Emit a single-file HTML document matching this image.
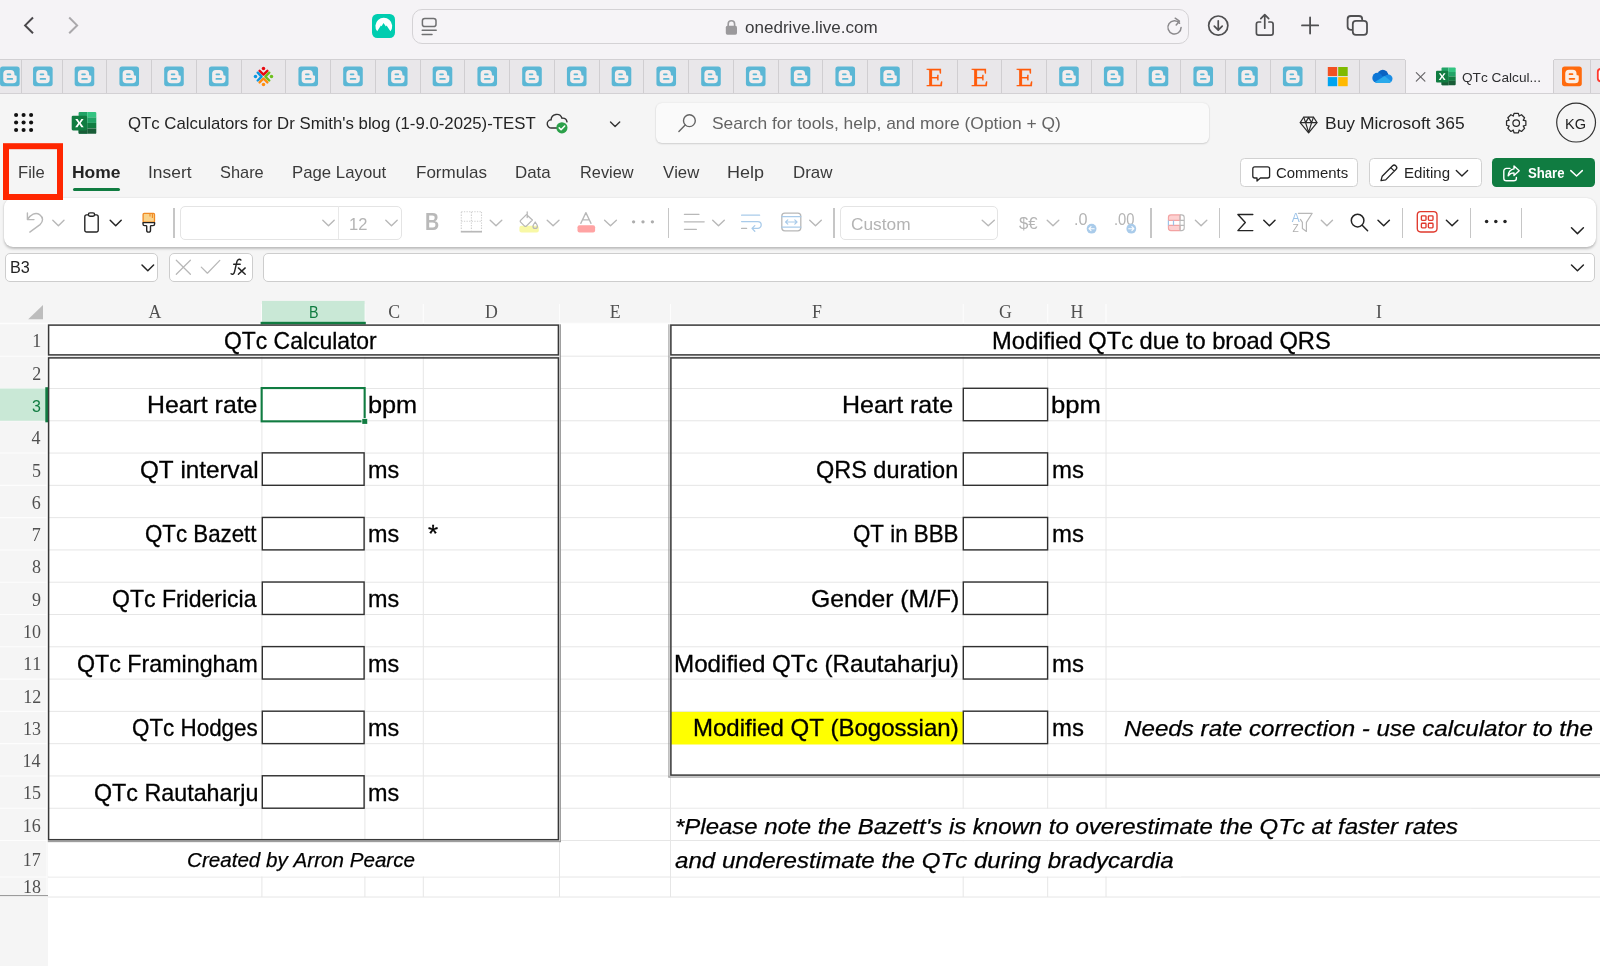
<!DOCTYPE html><html><head><meta charset="utf-8"><title>QTc Calculators</title><style>
*{box-sizing:border-box}
html,body{margin:0;padding:0}
body{will-change:transform;width:1600px;height:966px;overflow:hidden;background:#f5f5f5;font-family:"Liberation Sans",sans-serif;position:relative}
.t{position:absolute;white-space:nowrap;line-height:1;transform-origin:0 0;font-kerning:none;color:#000}
.a{position:absolute}
svg{position:absolute;left:0;top:0;overflow:visible}
.vs{position:absolute;width:1px;top:60px;height:33px;background:#d0ced1}
.sep{position:absolute;width:1.5px;top:207.5px;height:30px;background:#c6c6c6}
.gh{position:absolute;left:48px;height:1px;background:#e1e1e1;width:1552px}
.gv{position:absolute;top:324px;width:1px;background:#e1e1e1;height:573px}
.bx{position:absolute;border:1.5px solid #333}
.ob{position:absolute;border:1.6px solid #3a3a3a;box-shadow:0 0 0 1.1px #a8a8a8}
</style></head><body>
<div class="a" style="left:0;top:0;width:1600px;height:59px;background:#f5f3f6"></div>
<div class="a" style="left:411.7px;top:9px;width:777.6px;height:34.6px;border:1.2px solid #d4d2d5;border-radius:10px;background:#f6f4f7"></div>
<div class="a" style="left:371.8px;top:14.3px;width:23.5px;height:23.6px;border-radius:5.2px;background:#00cdb0"></div>
<span class="t" style="left:744.58px;top:19px;font-size:16.2px;color:#3b3b3d;transform:scaleX(1.0530);">onedrive.live.com</span>
<div class="a" style="left:0;top:59px;width:1600px;height:35px;background:#e9e7ea;border-top:1px solid #d2d0d3;border-bottom:1px solid #d3d1d4"></div>
<div class="a" style="left:1405px;top:58px;width:148.6px;height:35px;background:#f5f3f6"></div>
<div class="vs" style="left:20.70px"></div>
<div class="vs" style="left:61.60px"></div>
<div class="vs" style="left:106.35px"></div>
<div class="vs" style="left:151.10px"></div>
<div class="vs" style="left:195.85px"></div>
<div class="vs" style="left:240.60px"></div>
<div class="vs" style="left:285.35px"></div>
<div class="vs" style="left:330.10px"></div>
<div class="vs" style="left:374.85px"></div>
<div class="vs" style="left:419.60px"></div>
<div class="vs" style="left:464.35px"></div>
<div class="vs" style="left:509.10px"></div>
<div class="vs" style="left:553.85px"></div>
<div class="vs" style="left:598.60px"></div>
<div class="vs" style="left:643.35px"></div>
<div class="vs" style="left:688.10px"></div>
<div class="vs" style="left:732.85px"></div>
<div class="vs" style="left:777.60px"></div>
<div class="vs" style="left:822.35px"></div>
<div class="vs" style="left:867.10px"></div>
<div class="vs" style="left:911.85px"></div>
<div class="vs" style="left:956.60px"></div>
<div class="vs" style="left:1001.35px"></div>
<div class="vs" style="left:1046.10px"></div>
<div class="vs" style="left:1090.85px"></div>
<div class="vs" style="left:1135.60px"></div>
<div class="vs" style="left:1180.35px"></div>
<div class="vs" style="left:1225.10px"></div>
<div class="vs" style="left:1269.85px"></div>
<div class="vs" style="left:1314.60px"></div>
<div class="vs" style="left:1359.35px"></div>
<div class="vs" style="left:1589.80px"></div>
<div class="vs" style="left:1404.5px"></div><div class="vs" style="left:1553.1px"></div>
<svg width="1600" height="300" viewBox="0 0 1600 300">
<path d="M33 17.5 L25.1 25.4 L33 33.3" fill="none" stroke="#4a484b" stroke-width="2" stroke-linejoin="miter"/>
<path d="M69.2 17.5 L77.1 25.4 L69.2 33.3" fill="none" stroke="#aaa8ab" stroke-width="2" stroke-linejoin="miter"/>
<path d="M377.2 31.3 A8.4 8.4 0 1 1 390.4 31.3 L386.6 25.6 L385.9 26.6 L383.5 22.9 L381.6 26.2 L380.9 25.4 Z" fill="#fff"/>
<g fill="none" stroke="#707072" stroke-width="1.5" stroke-linecap="round"><rect x="422.4" y="18.4" width="13.6" height="8.2" rx="2.4"/><path d="M422.2 30.3 H436.2 M422.2 34.4 H432"/></g>
<rect x="725.8" y="25.8" width="11.2" height="8.9" rx="1.6" fill="#9b999c"/><path d="M728.2 26.5 v-2.6 a3.2 3.2 0 0 1 6.4 0 v2.6" fill="none" stroke="#9b999c" stroke-width="1.6"/>
<g fill="none" stroke="#8b898c" stroke-width="1.5" stroke-linecap="round" stroke-linejoin="round"><path d="M1179.6 23.2 A6.6 6.6 0 1 0 1181.1 27.5"/><path d="M1175.2 18.2 L1179.4 21.2 L1176.2 25"/></g>
<g fill="none" stroke="#4f4f51" stroke-width="1.7" stroke-linecap="round" stroke-linejoin="round"><circle cx="1218.25" cy="25.6" r="9.6"/><path d="M1218.25 20.8 V30 M1214.3 26.2 L1218.25 30.2 L1222.2 26.2"/></g>
<g fill="none" stroke="#4f4f51" stroke-width="1.7" stroke-linecap="round" stroke-linejoin="round"><path d="M1260.6 22 H1258.6 a2.2 2.2 0 0 0 -2.2 2.2 V33 a2.2 2.2 0 0 0 2.2 2.2 H1270.9 a2.2 2.2 0 0 0 2.2-2.2 V24.2 a2.2 2.2 0 0 0 -2.2-2.2 H1268.9"/><path d="M1264.75 15 V28.2 M1260.8 18.6 L1264.75 14.7 L1268.7 18.6"/></g>
<path d="M1302 25.4 H1318.2 M1310.1 17.4 V33.5" fill="none" stroke="#4f4f51" stroke-width="1.8" stroke-linecap="round"/>
<g fill="#f5f3f6" stroke="#4f4f51" stroke-width="1.8"><rect x="1347.6" y="16" width="14.6" height="13.8" rx="3.2"/><rect x="1352.8" y="20.9" width="14.2" height="14" rx="3.2"/></g>
<g transform="translate(0.05,66.60) scale(1.000)"><rect width="19.6" height="19.6" rx="2.6" fill="#5bb7d5"/><path d="M3.2 7.2 a3.8 3.8 0 0 1 3.8-3.8 h3.6 a3.8 3.8 0 0 1 3.8 3.8 v0.7 a0.9 0.9 0 0 0 .9 .9 h0.4 a0.9 0.9 0 0 1 .9 .9 v3.2 a3.8 3.8 0 0 1 -3.8 3.8 h-5.8 a3.8 3.8 0 0 1 -3.8-3.8 z" fill="#f3eded"/><rect x="6.6" y="6.9" width="4.6" height="1.7" rx=".85" fill="#5bb7d5"/><rect x="6.6" y="11.5" width="6.5" height="1.7" rx=".85" fill="#5bb7d5"/></g>
<g transform="translate(33.05,66.60) scale(1.000)"><rect width="19.6" height="19.6" rx="2.6" fill="#5bb7d5"/><path d="M3.2 7.2 a3.8 3.8 0 0 1 3.8-3.8 h3.6 a3.8 3.8 0 0 1 3.8 3.8 v0.7 a0.9 0.9 0 0 0 .9 .9 h0.4 a0.9 0.9 0 0 1 .9 .9 v3.2 a3.8 3.8 0 0 1 -3.8 3.8 h-5.8 a3.8 3.8 0 0 1 -3.8-3.8 z" fill="#f3eded"/><rect x="6.6" y="6.9" width="4.6" height="1.7" rx=".85" fill="#5bb7d5"/><rect x="6.6" y="11.5" width="6.5" height="1.7" rx=".85" fill="#5bb7d5"/></g>
<g transform="translate(74.67,66.60) scale(1.000)"><rect width="19.6" height="19.6" rx="2.6" fill="#5bb7d5"/><path d="M3.2 7.2 a3.8 3.8 0 0 1 3.8-3.8 h3.6 a3.8 3.8 0 0 1 3.8 3.8 v0.7 a0.9 0.9 0 0 0 .9 .9 h0.4 a0.9 0.9 0 0 1 .9 .9 v3.2 a3.8 3.8 0 0 1 -3.8 3.8 h-5.8 a3.8 3.8 0 0 1 -3.8-3.8 z" fill="#f3eded"/><rect x="6.6" y="6.9" width="4.6" height="1.7" rx=".85" fill="#5bb7d5"/><rect x="6.6" y="11.5" width="6.5" height="1.7" rx=".85" fill="#5bb7d5"/></g>
<g transform="translate(119.42,66.60) scale(1.000)"><rect width="19.6" height="19.6" rx="2.6" fill="#5bb7d5"/><path d="M3.2 7.2 a3.8 3.8 0 0 1 3.8-3.8 h3.6 a3.8 3.8 0 0 1 3.8 3.8 v0.7 a0.9 0.9 0 0 0 .9 .9 h0.4 a0.9 0.9 0 0 1 .9 .9 v3.2 a3.8 3.8 0 0 1 -3.8 3.8 h-5.8 a3.8 3.8 0 0 1 -3.8-3.8 z" fill="#f3eded"/><rect x="6.6" y="6.9" width="4.6" height="1.7" rx=".85" fill="#5bb7d5"/><rect x="6.6" y="11.5" width="6.5" height="1.7" rx=".85" fill="#5bb7d5"/></g>
<g transform="translate(164.17,66.60) scale(1.000)"><rect width="19.6" height="19.6" rx="2.6" fill="#5bb7d5"/><path d="M3.2 7.2 a3.8 3.8 0 0 1 3.8-3.8 h3.6 a3.8 3.8 0 0 1 3.8 3.8 v0.7 a0.9 0.9 0 0 0 .9 .9 h0.4 a0.9 0.9 0 0 1 .9 .9 v3.2 a3.8 3.8 0 0 1 -3.8 3.8 h-5.8 a3.8 3.8 0 0 1 -3.8-3.8 z" fill="#f3eded"/><rect x="6.6" y="6.9" width="4.6" height="1.7" rx=".85" fill="#5bb7d5"/><rect x="6.6" y="11.5" width="6.5" height="1.7" rx=".85" fill="#5bb7d5"/></g>
<g transform="translate(208.92,66.60) scale(1.000)"><rect width="19.6" height="19.6" rx="2.6" fill="#5bb7d5"/><path d="M3.2 7.2 a3.8 3.8 0 0 1 3.8-3.8 h3.6 a3.8 3.8 0 0 1 3.8 3.8 v0.7 a0.9 0.9 0 0 0 .9 .9 h0.4 a0.9 0.9 0 0 1 .9 .9 v3.2 a3.8 3.8 0 0 1 -3.8 3.8 h-5.8 a3.8 3.8 0 0 1 -3.8-3.8 z" fill="#f3eded"/><rect x="6.6" y="6.9" width="4.6" height="1.7" rx=".85" fill="#5bb7d5"/><rect x="6.6" y="11.5" width="6.5" height="1.7" rx=".85" fill="#5bb7d5"/></g>
<g transform="translate(263.48,76.6)"><g transform="rotate(0)"><circle cx="0" cy="-8" r="1.75" fill="#e90a12"/><path d="M-3.9 -5.8 L0 -1.9 L3.9 -5.8" fill="none" stroke="#e90a12" stroke-width="2.4" stroke-linecap="round" stroke-linejoin="round"/></g><g transform="rotate(90)"><circle cx="0" cy="-8" r="1.75" fill="#6dbf1e"/><path d="M-3.9 -5.8 L0 -1.9 L3.9 -5.8" fill="none" stroke="#6dbf1e" stroke-width="2.4" stroke-linecap="round" stroke-linejoin="round"/></g><g transform="rotate(180)"><circle cx="0" cy="-8" r="1.75" fill="#ff8c0c"/><path d="M-3.9 -5.8 L0 -1.9 L3.9 -5.8" fill="none" stroke="#ff8c0c" stroke-width="2.4" stroke-linecap="round" stroke-linejoin="round"/></g><g transform="rotate(270)"><circle cx="0" cy="-8" r="1.75" fill="#0d97e1"/><path d="M-3.9 -5.8 L0 -1.9 L3.9 -5.8" fill="none" stroke="#0d97e1" stroke-width="2.4" stroke-linecap="round" stroke-linejoin="round"/></g></g>
<g transform="translate(298.43,66.60) scale(1.000)"><rect width="19.6" height="19.6" rx="2.6" fill="#5bb7d5"/><path d="M3.2 7.2 a3.8 3.8 0 0 1 3.8-3.8 h3.6 a3.8 3.8 0 0 1 3.8 3.8 v0.7 a0.9 0.9 0 0 0 .9 .9 h0.4 a0.9 0.9 0 0 1 .9 .9 v3.2 a3.8 3.8 0 0 1 -3.8 3.8 h-5.8 a3.8 3.8 0 0 1 -3.8-3.8 z" fill="#f3eded"/><rect x="6.6" y="6.9" width="4.6" height="1.7" rx=".85" fill="#5bb7d5"/><rect x="6.6" y="11.5" width="6.5" height="1.7" rx=".85" fill="#5bb7d5"/></g>
<g transform="translate(343.18,66.60) scale(1.000)"><rect width="19.6" height="19.6" rx="2.6" fill="#5bb7d5"/><path d="M3.2 7.2 a3.8 3.8 0 0 1 3.8-3.8 h3.6 a3.8 3.8 0 0 1 3.8 3.8 v0.7 a0.9 0.9 0 0 0 .9 .9 h0.4 a0.9 0.9 0 0 1 .9 .9 v3.2 a3.8 3.8 0 0 1 -3.8 3.8 h-5.8 a3.8 3.8 0 0 1 -3.8-3.8 z" fill="#f3eded"/><rect x="6.6" y="6.9" width="4.6" height="1.7" rx=".85" fill="#5bb7d5"/><rect x="6.6" y="11.5" width="6.5" height="1.7" rx=".85" fill="#5bb7d5"/></g>
<g transform="translate(387.93,66.60) scale(1.000)"><rect width="19.6" height="19.6" rx="2.6" fill="#5bb7d5"/><path d="M3.2 7.2 a3.8 3.8 0 0 1 3.8-3.8 h3.6 a3.8 3.8 0 0 1 3.8 3.8 v0.7 a0.9 0.9 0 0 0 .9 .9 h0.4 a0.9 0.9 0 0 1 .9 .9 v3.2 a3.8 3.8 0 0 1 -3.8 3.8 h-5.8 a3.8 3.8 0 0 1 -3.8-3.8 z" fill="#f3eded"/><rect x="6.6" y="6.9" width="4.6" height="1.7" rx=".85" fill="#5bb7d5"/><rect x="6.6" y="11.5" width="6.5" height="1.7" rx=".85" fill="#5bb7d5"/></g>
<g transform="translate(432.68,66.60) scale(1.000)"><rect width="19.6" height="19.6" rx="2.6" fill="#5bb7d5"/><path d="M3.2 7.2 a3.8 3.8 0 0 1 3.8-3.8 h3.6 a3.8 3.8 0 0 1 3.8 3.8 v0.7 a0.9 0.9 0 0 0 .9 .9 h0.4 a0.9 0.9 0 0 1 .9 .9 v3.2 a3.8 3.8 0 0 1 -3.8 3.8 h-5.8 a3.8 3.8 0 0 1 -3.8-3.8 z" fill="#f3eded"/><rect x="6.6" y="6.9" width="4.6" height="1.7" rx=".85" fill="#5bb7d5"/><rect x="6.6" y="11.5" width="6.5" height="1.7" rx=".85" fill="#5bb7d5"/></g>
<g transform="translate(477.43,66.60) scale(1.000)"><rect width="19.6" height="19.6" rx="2.6" fill="#5bb7d5"/><path d="M3.2 7.2 a3.8 3.8 0 0 1 3.8-3.8 h3.6 a3.8 3.8 0 0 1 3.8 3.8 v0.7 a0.9 0.9 0 0 0 .9 .9 h0.4 a0.9 0.9 0 0 1 .9 .9 v3.2 a3.8 3.8 0 0 1 -3.8 3.8 h-5.8 a3.8 3.8 0 0 1 -3.8-3.8 z" fill="#f3eded"/><rect x="6.6" y="6.9" width="4.6" height="1.7" rx=".85" fill="#5bb7d5"/><rect x="6.6" y="11.5" width="6.5" height="1.7" rx=".85" fill="#5bb7d5"/></g>
<g transform="translate(522.18,66.60) scale(1.000)"><rect width="19.6" height="19.6" rx="2.6" fill="#5bb7d5"/><path d="M3.2 7.2 a3.8 3.8 0 0 1 3.8-3.8 h3.6 a3.8 3.8 0 0 1 3.8 3.8 v0.7 a0.9 0.9 0 0 0 .9 .9 h0.4 a0.9 0.9 0 0 1 .9 .9 v3.2 a3.8 3.8 0 0 1 -3.8 3.8 h-5.8 a3.8 3.8 0 0 1 -3.8-3.8 z" fill="#f3eded"/><rect x="6.6" y="6.9" width="4.6" height="1.7" rx=".85" fill="#5bb7d5"/><rect x="6.6" y="11.5" width="6.5" height="1.7" rx=".85" fill="#5bb7d5"/></g>
<g transform="translate(566.93,66.60) scale(1.000)"><rect width="19.6" height="19.6" rx="2.6" fill="#5bb7d5"/><path d="M3.2 7.2 a3.8 3.8 0 0 1 3.8-3.8 h3.6 a3.8 3.8 0 0 1 3.8 3.8 v0.7 a0.9 0.9 0 0 0 .9 .9 h0.4 a0.9 0.9 0 0 1 .9 .9 v3.2 a3.8 3.8 0 0 1 -3.8 3.8 h-5.8 a3.8 3.8 0 0 1 -3.8-3.8 z" fill="#f3eded"/><rect x="6.6" y="6.9" width="4.6" height="1.7" rx=".85" fill="#5bb7d5"/><rect x="6.6" y="11.5" width="6.5" height="1.7" rx=".85" fill="#5bb7d5"/></g>
<g transform="translate(611.68,66.60) scale(1.000)"><rect width="19.6" height="19.6" rx="2.6" fill="#5bb7d5"/><path d="M3.2 7.2 a3.8 3.8 0 0 1 3.8-3.8 h3.6 a3.8 3.8 0 0 1 3.8 3.8 v0.7 a0.9 0.9 0 0 0 .9 .9 h0.4 a0.9 0.9 0 0 1 .9 .9 v3.2 a3.8 3.8 0 0 1 -3.8 3.8 h-5.8 a3.8 3.8 0 0 1 -3.8-3.8 z" fill="#f3eded"/><rect x="6.6" y="6.9" width="4.6" height="1.7" rx=".85" fill="#5bb7d5"/><rect x="6.6" y="11.5" width="6.5" height="1.7" rx=".85" fill="#5bb7d5"/></g>
<g transform="translate(656.43,66.60) scale(1.000)"><rect width="19.6" height="19.6" rx="2.6" fill="#5bb7d5"/><path d="M3.2 7.2 a3.8 3.8 0 0 1 3.8-3.8 h3.6 a3.8 3.8 0 0 1 3.8 3.8 v0.7 a0.9 0.9 0 0 0 .9 .9 h0.4 a0.9 0.9 0 0 1 .9 .9 v3.2 a3.8 3.8 0 0 1 -3.8 3.8 h-5.8 a3.8 3.8 0 0 1 -3.8-3.8 z" fill="#f3eded"/><rect x="6.6" y="6.9" width="4.6" height="1.7" rx=".85" fill="#5bb7d5"/><rect x="6.6" y="11.5" width="6.5" height="1.7" rx=".85" fill="#5bb7d5"/></g>
<g transform="translate(701.18,66.60) scale(1.000)"><rect width="19.6" height="19.6" rx="2.6" fill="#5bb7d5"/><path d="M3.2 7.2 a3.8 3.8 0 0 1 3.8-3.8 h3.6 a3.8 3.8 0 0 1 3.8 3.8 v0.7 a0.9 0.9 0 0 0 .9 .9 h0.4 a0.9 0.9 0 0 1 .9 .9 v3.2 a3.8 3.8 0 0 1 -3.8 3.8 h-5.8 a3.8 3.8 0 0 1 -3.8-3.8 z" fill="#f3eded"/><rect x="6.6" y="6.9" width="4.6" height="1.7" rx=".85" fill="#5bb7d5"/><rect x="6.6" y="11.5" width="6.5" height="1.7" rx=".85" fill="#5bb7d5"/></g>
<g transform="translate(745.93,66.60) scale(1.000)"><rect width="19.6" height="19.6" rx="2.6" fill="#5bb7d5"/><path d="M3.2 7.2 a3.8 3.8 0 0 1 3.8-3.8 h3.6 a3.8 3.8 0 0 1 3.8 3.8 v0.7 a0.9 0.9 0 0 0 .9 .9 h0.4 a0.9 0.9 0 0 1 .9 .9 v3.2 a3.8 3.8 0 0 1 -3.8 3.8 h-5.8 a3.8 3.8 0 0 1 -3.8-3.8 z" fill="#f3eded"/><rect x="6.6" y="6.9" width="4.6" height="1.7" rx=".85" fill="#5bb7d5"/><rect x="6.6" y="11.5" width="6.5" height="1.7" rx=".85" fill="#5bb7d5"/></g>
<g transform="translate(790.68,66.60) scale(1.000)"><rect width="19.6" height="19.6" rx="2.6" fill="#5bb7d5"/><path d="M3.2 7.2 a3.8 3.8 0 0 1 3.8-3.8 h3.6 a3.8 3.8 0 0 1 3.8 3.8 v0.7 a0.9 0.9 0 0 0 .9 .9 h0.4 a0.9 0.9 0 0 1 .9 .9 v3.2 a3.8 3.8 0 0 1 -3.8 3.8 h-5.8 a3.8 3.8 0 0 1 -3.8-3.8 z" fill="#f3eded"/><rect x="6.6" y="6.9" width="4.6" height="1.7" rx=".85" fill="#5bb7d5"/><rect x="6.6" y="11.5" width="6.5" height="1.7" rx=".85" fill="#5bb7d5"/></g>
<g transform="translate(835.43,66.60) scale(1.000)"><rect width="19.6" height="19.6" rx="2.6" fill="#5bb7d5"/><path d="M3.2 7.2 a3.8 3.8 0 0 1 3.8-3.8 h3.6 a3.8 3.8 0 0 1 3.8 3.8 v0.7 a0.9 0.9 0 0 0 .9 .9 h0.4 a0.9 0.9 0 0 1 .9 .9 v3.2 a3.8 3.8 0 0 1 -3.8 3.8 h-5.8 a3.8 3.8 0 0 1 -3.8-3.8 z" fill="#f3eded"/><rect x="6.6" y="6.9" width="4.6" height="1.7" rx=".85" fill="#5bb7d5"/><rect x="6.6" y="11.5" width="6.5" height="1.7" rx=".85" fill="#5bb7d5"/></g>
<g transform="translate(880.18,66.60) scale(1.000)"><rect width="19.6" height="19.6" rx="2.6" fill="#5bb7d5"/><path d="M3.2 7.2 a3.8 3.8 0 0 1 3.8-3.8 h3.6 a3.8 3.8 0 0 1 3.8 3.8 v0.7 a0.9 0.9 0 0 0 .9 .9 h0.4 a0.9 0.9 0 0 1 .9 .9 v3.2 a3.8 3.8 0 0 1 -3.8 3.8 h-5.8 a3.8 3.8 0 0 1 -3.8-3.8 z" fill="#f3eded"/><rect x="6.6" y="6.9" width="4.6" height="1.7" rx=".85" fill="#5bb7d5"/><rect x="6.6" y="11.5" width="6.5" height="1.7" rx=".85" fill="#5bb7d5"/></g>
<g transform="translate(1059.17,66.60) scale(1.000)"><rect width="19.6" height="19.6" rx="2.6" fill="#5bb7d5"/><path d="M3.2 7.2 a3.8 3.8 0 0 1 3.8-3.8 h3.6 a3.8 3.8 0 0 1 3.8 3.8 v0.7 a0.9 0.9 0 0 0 .9 .9 h0.4 a0.9 0.9 0 0 1 .9 .9 v3.2 a3.8 3.8 0 0 1 -3.8 3.8 h-5.8 a3.8 3.8 0 0 1 -3.8-3.8 z" fill="#f3eded"/><rect x="6.6" y="6.9" width="4.6" height="1.7" rx=".85" fill="#5bb7d5"/><rect x="6.6" y="11.5" width="6.5" height="1.7" rx=".85" fill="#5bb7d5"/></g>
<g transform="translate(1103.92,66.60) scale(1.000)"><rect width="19.6" height="19.6" rx="2.6" fill="#5bb7d5"/><path d="M3.2 7.2 a3.8 3.8 0 0 1 3.8-3.8 h3.6 a3.8 3.8 0 0 1 3.8 3.8 v0.7 a0.9 0.9 0 0 0 .9 .9 h0.4 a0.9 0.9 0 0 1 .9 .9 v3.2 a3.8 3.8 0 0 1 -3.8 3.8 h-5.8 a3.8 3.8 0 0 1 -3.8-3.8 z" fill="#f3eded"/><rect x="6.6" y="6.9" width="4.6" height="1.7" rx=".85" fill="#5bb7d5"/><rect x="6.6" y="11.5" width="6.5" height="1.7" rx=".85" fill="#5bb7d5"/></g>
<g transform="translate(1148.67,66.60) scale(1.000)"><rect width="19.6" height="19.6" rx="2.6" fill="#5bb7d5"/><path d="M3.2 7.2 a3.8 3.8 0 0 1 3.8-3.8 h3.6 a3.8 3.8 0 0 1 3.8 3.8 v0.7 a0.9 0.9 0 0 0 .9 .9 h0.4 a0.9 0.9 0 0 1 .9 .9 v3.2 a3.8 3.8 0 0 1 -3.8 3.8 h-5.8 a3.8 3.8 0 0 1 -3.8-3.8 z" fill="#f3eded"/><rect x="6.6" y="6.9" width="4.6" height="1.7" rx=".85" fill="#5bb7d5"/><rect x="6.6" y="11.5" width="6.5" height="1.7" rx=".85" fill="#5bb7d5"/></g>
<g transform="translate(1193.42,66.60) scale(1.000)"><rect width="19.6" height="19.6" rx="2.6" fill="#5bb7d5"/><path d="M3.2 7.2 a3.8 3.8 0 0 1 3.8-3.8 h3.6 a3.8 3.8 0 0 1 3.8 3.8 v0.7 a0.9 0.9 0 0 0 .9 .9 h0.4 a0.9 0.9 0 0 1 .9 .9 v3.2 a3.8 3.8 0 0 1 -3.8 3.8 h-5.8 a3.8 3.8 0 0 1 -3.8-3.8 z" fill="#f3eded"/><rect x="6.6" y="6.9" width="4.6" height="1.7" rx=".85" fill="#5bb7d5"/><rect x="6.6" y="11.5" width="6.5" height="1.7" rx=".85" fill="#5bb7d5"/></g>
<g transform="translate(1238.17,66.60) scale(1.000)"><rect width="19.6" height="19.6" rx="2.6" fill="#5bb7d5"/><path d="M3.2 7.2 a3.8 3.8 0 0 1 3.8-3.8 h3.6 a3.8 3.8 0 0 1 3.8 3.8 v0.7 a0.9 0.9 0 0 0 .9 .9 h0.4 a0.9 0.9 0 0 1 .9 .9 v3.2 a3.8 3.8 0 0 1 -3.8 3.8 h-5.8 a3.8 3.8 0 0 1 -3.8-3.8 z" fill="#f3eded"/><rect x="6.6" y="6.9" width="4.6" height="1.7" rx=".85" fill="#5bb7d5"/><rect x="6.6" y="11.5" width="6.5" height="1.7" rx=".85" fill="#5bb7d5"/></g>
<g transform="translate(1282.92,66.60) scale(1.000)"><rect width="19.6" height="19.6" rx="2.6" fill="#5bb7d5"/><path d="M3.2 7.2 a3.8 3.8 0 0 1 3.8-3.8 h3.6 a3.8 3.8 0 0 1 3.8 3.8 v0.7 a0.9 0.9 0 0 0 .9 .9 h0.4 a0.9 0.9 0 0 1 .9 .9 v3.2 a3.8 3.8 0 0 1 -3.8 3.8 h-5.8 a3.8 3.8 0 0 1 -3.8-3.8 z" fill="#f3eded"/><rect x="6.6" y="6.9" width="4.6" height="1.7" rx=".85" fill="#5bb7d5"/><rect x="6.6" y="11.5" width="6.5" height="1.7" rx=".85" fill="#5bb7d5"/></g>
<rect x="1327.8" y="67" width="9.4" height="9.1" fill="#f25022"/><rect x="1338.2" y="67" width="9.5" height="9.1" fill="#7fba00"/><rect x="1327.8" y="77.1" width="9.4" height="9.1" fill="#00a4ef"/><rect x="1338.2" y="77.1" width="9.5" height="9.1" fill="#ffb900"/>
<circle cx="1382.8" cy="75.3" r="5.5" fill="#0a63c2"/><circle cx="1388.3" cy="78.8" r="4.2" fill="#1a8de4"/><circle cx="1377.4" cy="77.9" r="5.1" fill="#0d76d6"/><path d="M1377.4 83 L1375 81.6 L1379 76 L1384.6 75.9 L1388 78 L1388.3 83z" fill="#0d76d6"/><path d="M1384.5 75.9 L1380 72 L1386 71 L1388.2 75 Z" fill="#0a63c2"/><path d="M1384.5 75.9 L1388.3 74.6 L1392 79 L1389 83z" fill="#1a8de4"/><path d="M1374.9 81.9 L1384.5 75.9 L1391.4 81.6 a4.2 4.2 0 0 1 -3.1 1.4 H1377.4 a5.1 5.1 0 0 1 -2.5-1.1z" fill="#29a9eb"/>
<path d="M1416.3 72.6 L1424.9 81.2 M1424.9 72.6 L1416.3 81.2" stroke="#666467" stroke-width="1.15" stroke-linecap="round"/>
<g transform="translate(1436,67.6) scale(0.7880)"><path d="M8.2 0 H15.8 V22.3 H8.2 a1.2 1.2 0 0 1 -1.2-1.2 V1.2 A1.2 1.2 0 0 1 8.2 0z" fill="#21a366"/><path d="M15.8 0 H23.8 a1.2 1.2 0 0 1 1.2 1.2 V5.6 H15.8z" fill="#33c481"/><rect x="15.8" y="5.6" width="9.2" height="5.6" fill="#21a366"/><rect x="15.8" y="11.2" width="9.2" height="5.6" fill="#107c41"/><path d="M15.8 16.8 H25 V21.1 a1.2 1.2 0 0 1 -1.2 1.2 H15.8z" fill="#185c37"/><rect x="7" y="11.2" width="8.8" height="5.6" fill="#107c41"/><path d="M7 16.8 H15.8 V22.3 H8.2 a1.2 1.2 0 0 1 -1.2-1.2z" fill="#185c37"/><rect x="0" y="4" width="15.6" height="14.8" rx="1.3" fill="#107c41"/><path d="M3.6 7.2 H6 L7.9 10.3 L9.8 7.2 H12.1 L9.1 11.4 L12.2 15.7 H9.8 L7.8 12.6 L5.9 15.7 H3.5 L6.6 11.4z" fill="#fff"/></g>
<g transform="translate(1562.00,66.40) scale(1.010)"><rect width="19.6" height="19.6" rx="2.6" fill="#ff6a0d"/><path d="M3.2 7.2 a3.8 3.8 0 0 1 3.8-3.8 h3.6 a3.8 3.8 0 0 1 3.8 3.8 v0.7 a0.9 0.9 0 0 0 .9 .9 h0.4 a0.9 0.9 0 0 1 .9 .9 v3.2 a3.8 3.8 0 0 1 -3.8 3.8 h-5.8 a3.8 3.8 0 0 1 -3.8-3.8 z" fill="#fbefe6"/><rect x="6.6" y="6.9" width="4.6" height="1.7" rx=".85" fill="#ff6a0d"/><rect x="6.6" y="11.5" width="6.5" height="1.7" rx=".85" fill="#ff6a0d"/></g>
<rect x="1597.8" y="68.9" width="10" height="12.4" rx="3" fill="#fff" stroke="#ff3b30" stroke-width="1.8"/>
</svg>
<span class="t" style="left:926.25px;top:65px;font-size:25.7px;color:#ff5a0a;font-family:'Liberation Serif',serif;transform:scaleX(1.1186);-webkit-text-stroke:0.3px #ff5a0a;">E</span>
<span class="t" style="left:971.00px;top:65px;font-size:25.7px;color:#ff5a0a;font-family:'Liberation Serif',serif;transform:scaleX(1.1186);-webkit-text-stroke:0.3px #ff5a0a;">E</span>
<span class="t" style="left:1015.75px;top:65px;font-size:25.7px;color:#ff5a0a;font-family:'Liberation Serif',serif;transform:scaleX(1.1186);-webkit-text-stroke:0.3px #ff5a0a;">E</span>
<span class="t" style="left:1462.25px;top:71px;font-size:13.2px;color:#2e2e30;transform:scaleX(1.0356);">QTc Calcul...</span>
<span class="t" style="left:127.51px;top:115px;font-size:16.4px;color:#242424;transform:scaleX(1.0231);">QTc Calculators for Dr Smith's blog (1-9.0-2025)-TEST</span>
<div class="a" style="left:656.2px;top:102.8px;width:552.6px;height:40.2px;border-radius:6px;background:#fafafa;box-shadow:0 1px 2px rgba(0,0,0,.14),0 0 2px rgba(0,0,0,.10)"></div>
<span class="t" style="left:712.01px;top:115px;font-size:16.2px;color:#646464;transform:scaleX(1.0754);">Search for tools, help, and more (Option + Q)</span>
<span class="t" style="left:1325.37px;top:115px;font-size:16.2px;color:#242424;transform:scaleX(1.0780);">Buy Microsoft 365</span>
<span class="t" style="left:1565.10px;top:117px;font-size:14.6px;color:#242424;transform:scaleX(0.9997);">KG</span>
<span class="t" style="left:17.54px;top:164px;font-size:16.2px;color:#3a3a3a;transform:scaleX(1.0268);">File</span>
<span class="t" style="left:72.03px;top:164px;font-size:16.2px;color:#242424;font-weight:bold;transform:scaleX(1.0791);">Home</span>
<span class="t" style="left:147.79px;top:164px;font-size:16.2px;color:#3a3a3a;transform:scaleX(1.0745);">Insert</span>
<span class="t" style="left:220.16px;top:164px;font-size:16.2px;color:#3a3a3a;transform:scaleX(1.0126);">Share</span>
<span class="t" style="left:292.02px;top:164px;font-size:16.2px;color:#3a3a3a;transform:scaleX(1.0366);">Page Layout</span>
<span class="t" style="left:415.80px;top:164px;font-size:16.2px;color:#3a3a3a;transform:scaleX(1.0518);">Formulas</span>
<span class="t" style="left:515.01px;top:164px;font-size:16.2px;color:#3a3a3a;transform:scaleX(1.0429);">Data</span>
<span class="t" style="left:580.06px;top:164px;font-size:16.2px;color:#3a3a3a;transform:scaleX(1.0091);">Review</span>
<span class="t" style="left:662.93px;top:164px;font-size:16.2px;color:#3a3a3a;transform:scaleX(1.0319);">View</span>
<span class="t" style="left:727.42px;top:164px;font-size:16.2px;color:#3a3a3a;transform:scaleX(1.1115);">Help</span>
<span class="t" style="left:792.51px;top:164px;font-size:16.2px;color:#3a3a3a;transform:scaleX(1.0435);">Draw</span>
<div class="a" style="left:73px;top:187.6px;width:47.2px;height:3px;border-radius:1.5px;background:#107c41"></div>
<div class="a" style="left:1240.4px;top:158.4px;width:118px;height:28.8px;border:1px solid #d1d1d1;border-radius:4.5px;background:#fff"></div>
<div class="a" style="left:1369.2px;top:158.4px;width:112.4px;height:28.8px;border:1px solid #d1d1d1;border-radius:4.5px;background:#fff"></div>
<div class="a" style="left:1491.8px;top:158.1px;width:103.7px;height:29.4px;border-radius:4.5px;background:#107c41"></div>
<span class="t" style="left:1275.54px;top:166px;font-size:14.3px;color:#242424;transform:scaleX(1.0443);">Comments</span>
<span class="t" style="left:1404.17px;top:166px;font-size:14.3px;color:#242424;transform:scaleX(1.0521);">Editing</span>
<span class="t" style="left:1527.62px;top:166px;font-size:14.3px;color:#fff;font-weight:bold;transform:scaleX(0.9191);">Share</span>
<div class="a" style="left:3.8px;top:197.6px;width:1592px;height:49.6px;border-radius:9px;background:#fff;box-shadow:0 1.2px 2.5px rgba(0,0,0,.22),0 0 1.5px rgba(0,0,0,.10)"></div>
<div class="sep" style="left:173.25px"></div>
<div class="sep" style="left:667.85px"></div>
<div class="sep" style="left:833.45px"></div>
<div class="sep" style="left:1150.25px"></div>
<div class="sep" style="left:1218.85px"></div>
<div class="sep" style="left:1401.75px"></div>
<div class="sep" style="left:1469.85px"></div>
<div class="sep" style="left:1520.75px"></div>
<div class="a" style="left:180px;top:205.5px;width:222px;height:34px;border:1px solid #e4e4e4;border-radius:5px"></div>
<div class="a" style="left:338px;top:206px;width:1px;height:33px;background:#e8e8e8"></div>
<div class="a" style="left:840px;top:205.5px;width:158.3px;height:34px;border:1px solid #e4e4e4;border-radius:5px"></div>
<span class="t" style="left:349.04px;top:217px;font-size:16.6px;color:#b4b4b4;transform:scaleX(0.9960);">12</span>
<span class="t" style="left:425.28px;top:211px;font-size:23px;color:#b9b9b9;font-weight:bold;transform:scaleX(0.8555);">B</span>
<span class="t" style="left:850.72px;top:217px;font-size:16.6px;color:#b4b4b4;transform:scaleX(1.0424);">Custom</span>
<span class="t" style="left:1019.32px;top:215px;font-size:16.4px;color:#b4b4b4;transform:scaleX(1.0262);">$€</span>
<span class="t" style="left:1074.32px;top:212px;font-size:15.8px;color:#b4b4b4;transform:scaleX(1.0254);">.0</span>
<span class="t" style="left:1114.45px;top:212px;font-size:15.8px;color:#b4b4b4;transform:scaleX(0.9345);">.00</span>
<div class="a" style="left:5px;top:253px;width:153.2px;height:28.6px;border:1px solid #cdcdcd;border-radius:5px;background:#fff"></div>
<div class="a" style="left:169.2px;top:253px;width:83.4px;height:28.6px;border:1px solid #cdcdcd;border-radius:5px;background:#fff"></div>
<div class="a" style="left:263.2px;top:253px;width:1332px;height:28.6px;border:1px solid #cdcdcd;border-radius:5px;background:#fff"></div>
<span class="t" style="left:10.27px;top:259px;font-size:16.2px;color:#242424;transform:scaleX(1.0015);">B3</span>
<svg width="1600" height="300" viewBox="0 0 1600 300">
<circle cx="16.1" cy="115" r="2.05" fill="#111"/>
<circle cx="23.6" cy="115" r="2.05" fill="#111"/>
<circle cx="31.1" cy="115" r="2.05" fill="#111"/>
<circle cx="16.1" cy="122.5" r="2.05" fill="#111"/>
<circle cx="23.6" cy="122.5" r="2.05" fill="#111"/>
<circle cx="31.1" cy="122.5" r="2.05" fill="#111"/>
<circle cx="16.1" cy="130" r="2.05" fill="#111"/>
<circle cx="23.6" cy="130" r="2.05" fill="#111"/>
<circle cx="31.1" cy="130" r="2.05" fill="#111"/>
<g transform="translate(71.7,111.9) scale(0.9840)"><path d="M8.2 0 H15.8 V22.3 H8.2 a1.2 1.2 0 0 1 -1.2-1.2 V1.2 A1.2 1.2 0 0 1 8.2 0z" fill="#21a366"/><path d="M15.8 0 H23.8 a1.2 1.2 0 0 1 1.2 1.2 V5.6 H15.8z" fill="#33c481"/><rect x="15.8" y="5.6" width="9.2" height="5.6" fill="#21a366"/><rect x="15.8" y="11.2" width="9.2" height="5.6" fill="#107c41"/><path d="M15.8 16.8 H25 V21.1 a1.2 1.2 0 0 1 -1.2 1.2 H15.8z" fill="#185c37"/><rect x="7" y="11.2" width="8.8" height="5.6" fill="#107c41"/><path d="M7 16.8 H15.8 V22.3 H8.2 a1.2 1.2 0 0 1 -1.2-1.2z" fill="#185c37"/><rect x="0" y="4" width="15.6" height="14.8" rx="1.3" fill="#107c41"/><path d="M3.6 7.2 H6 L7.9 10.3 L9.8 7.2 H12.1 L9.1 11.4 L12.2 15.7 H9.8 L7.8 12.6 L5.9 15.7 H3.5 L6.6 11.4z" fill="#fff"/></g>
<path d="M557.5 128 H551.6 a4.1 4.1 0 0 1 -.5-8.2 a5.6 5.6 0 0 1 10.9-1.6 a4.6 4.6 0 0 1 5 3.6" fill="none" stroke="#333" stroke-width="1.4" stroke-linecap="round"/>
<circle cx="561.9" cy="127.8" r="5.6" fill="#2ba049"/><path d="M559.2 127.9 L561.1 129.8 L564.7 126" fill="none" stroke="#fff" stroke-width="1.5" stroke-linecap="round" stroke-linejoin="round"/>
<path d="M610.50 122.00 L615.10 126.60 L619.70 122.00" fill="none" stroke="#333" stroke-width="1.4" stroke-linecap="round" stroke-linejoin="round"/>
<g fill="none" stroke="#646464" stroke-width="1.4" stroke-linecap="round"><circle cx="689.4" cy="120.7" r="5.9"/><path d="M685.2 125 L678.9 131.4"/></g>
<g fill="none" stroke="#2b2b2b" stroke-width="1.2" stroke-linejoin="round" stroke-linecap="round"><path d="M1303.6 117.2 H1313.6 L1317 122.6 L1308.6 132.8 L1300.2 122.6 Z"/><path d="M1300.4 122.6 H1316.8 M1305.6 122.6 L1308.6 132.4 L1311.6 122.6 M1303.8 117.4 L1305.6 122.6 L1308.6 117.4 L1311.6 122.6 L1313.4 117.4"/></g>
<path d="M1514.04 113.44 L1518.36 113.44 L1519.16 116.10 L1519.06 116.06 L1521.50 114.74 L1524.56 117.80 L1523.24 120.24 L1523.20 120.14 L1525.86 120.94 L1525.86 125.26 L1523.20 126.06 L1523.24 125.96 L1524.56 128.40 L1521.50 131.46 L1519.06 130.14 L1519.16 130.10 L1518.36 132.76 L1514.04 132.76 L1513.24 130.10 L1513.34 130.14 L1510.90 131.46 L1507.84 128.40 L1509.16 125.96 L1509.20 126.06 L1506.54 125.26 L1506.54 120.94 L1509.20 120.14 L1509.16 120.24 L1507.84 117.80 L1510.90 114.74 L1513.34 116.06 L1513.24 116.10Z" fill="none" stroke="#2b2b2b" stroke-width="1.25" stroke-linejoin="round"/><circle cx="1516.2" cy="123.1" r="3.3" fill="none" stroke="#2b2b2b" stroke-width="1.25"/>
<circle cx="1576.1" cy="122.6" r="19.4" fill="none" stroke="#333" stroke-width="1.2"/>
<path d="M1254.8 166.8 H1267.6 a2 2 0 0 1 2 2 V176 a2 2 0 0 1 -2 2 H1260.4 L1257 181 V178 H1254.8 a2 2 0 0 1 -2-2 V168.8 a2 2 0 0 1 2-2z" fill="none" stroke="#242424" stroke-width="1.3" stroke-linejoin="round"/>
<path d="M1381 180.6 L1382.2 176.2 L1392.6 165.8 a2.2 2.2 0 0 1 3.1 0 l.4 .4 a2.2 2.2 0 0 1 0 3.1 L1385.7 179.9 Z M1390.8 167.6 L1394.3 171.1" fill="none" stroke="#242424" stroke-width="1.3" stroke-linejoin="round"/>
<path d="M1456.30 170.60 L1461.95 176.00 L1467.60 170.60" fill="none" stroke="#242424" stroke-width="1.4" stroke-linecap="round" stroke-linejoin="round"/>
<g fill="none" stroke="#fff" stroke-width="1.4" stroke-linejoin="round" stroke-linecap="round"><path d="M1510 168.4 H1506.4 a2.6 2.6 0 0 0 -2.6 2.6 V178.2 a2.6 2.6 0 0 0 2.6 2.6 H1513.8 a2.6 2.6 0 0 0 2.6-2.6 V177.4"/><path d="M1514 166 L1519.2 170.8 L1514 175.6 V172.9 c-2.6 0 -4.4 .8 -5.8 2.9 c.3-3.6 2.3-6.4 5.8-6.9 z"/></g>
<path d="M1570.80 170.60 L1576.55 176.00 L1582.30 170.60" fill="none" stroke="#fff" stroke-width="1.5" stroke-linecap="round" stroke-linejoin="round"/>
<path d="M27.4 213 V219.6 H34 M27.6 219.4 C30.5 214.5 35.5 211.8 39.6 214.6 C43.6 217.4 43.3 221.8 40 224.6 L29.8 232.1" fill="none" stroke="#b8b8b8" stroke-width="1.4" stroke-linecap="round" stroke-linejoin="round"/>
<path d="M52.80 220.20 L58.40 225.80 L64.00 220.20" fill="none" stroke="#b8b8b8" stroke-width="1.4" stroke-linecap="round" stroke-linejoin="round"/>
<g fill="none" stroke="#242424" stroke-width="1.4" stroke-linejoin="round"><path d="M88.4 214.9 H86.6 a1.8 1.8 0 0 0 -1.8 1.8 V230.2 a1.8 1.8 0 0 0 1.8 1.8 H96.4 a1.8 1.8 0 0 0 1.8-1.8 V216.7 a1.8 1.8 0 0 0 -1.8-1.8 H94.6"/><rect x="88.4" y="212.9" width="6.2" height="3.3" rx="1.6"/></g>
<path d="M110.20 220.20 L115.70 225.80 L121.20 220.20" fill="none" stroke="#242424" stroke-width="1.5" stroke-linecap="round" stroke-linejoin="round"/>
<rect x="143.1" y="213.4" width="11.4" height="8.8" rx="1" fill="#fad38a" stroke="#f08a24" stroke-width="1.3"/><path d="M150 213.6 v3 M152.4 213.6 v4.4" stroke="#f08a24" stroke-width="1.1"/>
<path d="M143 222.6 H154.6 V224 a1.6 1.6 0 0 1 -1.6 1.6 H151.4 a.9 .9 0 0 0 -.9 .9 V230.2 a1.9 1.9 0 0 1 -3.8 0 V226.5 a.9 .9 0 0 0 -.9-.9 H144.6 a1.6 1.6 0 0 1 -1.6-1.6z" fill="none" stroke="#242424" stroke-width="1.4" stroke-linejoin="round"/>
<path d="M322.80 220.20 L328.50 225.80 L334.20 220.20" fill="none" stroke="#b8b8b8" stroke-width="1.4" stroke-linecap="round" stroke-linejoin="round"/>
<path d="M385.80 220.20 L391.50 225.80 L397.20 220.20" fill="none" stroke="#b8b8b8" stroke-width="1.4" stroke-linecap="round" stroke-linejoin="round"/>
<g stroke="#cfcfcf" stroke-width="1.1" stroke-dasharray="1.3 1.3" fill="none"><path d="M461.3 211.8 H481.5 M461.3 221.3 H481.5 M461.3 212 V230.6 M471.4 212 V230.6 M481.5 212 V230.6"/></g><path d="M460.8 231.7 H482" stroke="#b8b8b8" stroke-width="1.7"/>
<path d="M490.20 220.20 L496.00 225.80 L501.80 220.20" fill="none" stroke="#b8b8b8" stroke-width="1.4" stroke-linecap="round" stroke-linejoin="round"/>
<rect x="519.4" y="225.8" width="19.4" height="6.6" rx="2" fill="#f8f8a6"/><g fill="none" stroke="#b8b8b8" stroke-width="1.3" stroke-linejoin="round" stroke-linecap="round"><path d="M527.2 212 V217.6 M526.4 214.6 L520.6 220.4 a1.2 1.2 0 0 0 0 1.7 L524.6 226.1 a1.2 1.2 0 0 0 1.7 0 L532.4 220 Z"/><path d="M535.2 222 c1.4 2 2.2 3.2 2.2 4.2 a2.2 2.2 0 0 1 -4.4 0 c0-1 .8-2.2 2.2-4.2z"/></g>
<path d="M547.20 220.20 L553.10 225.80 L559.00 220.20" fill="none" stroke="#b8b8b8" stroke-width="1.4" stroke-linecap="round" stroke-linejoin="round"/>
<rect x="577.5" y="225.2" width="17.6" height="7.2" rx="2" fill="#ffa3a3"/><path d="M580.8 223.4 L585.9 212.6 L591 223.4 M582.6 219.8 H589.2" fill="none" stroke="#b8b8b8" stroke-width="1.3" stroke-linejoin="round" stroke-linecap="round"/>
<path d="M604.60 220.20 L610.50 225.80 L616.40 220.20" fill="none" stroke="#b8b8b8" stroke-width="1.4" stroke-linecap="round" stroke-linejoin="round"/>
<circle cx="633.6" cy="221.8" r="1.65" fill="#adadad"/>
<circle cx="643" cy="221.8" r="1.65" fill="#adadad"/>
<circle cx="652.4" cy="221.8" r="1.65" fill="#adadad"/>
<path d="M684.4 214.3 H699 M684.4 221.8 H704.2 M684.4 229.3 H696.4" stroke="#b8b8b8" stroke-width="1.3" stroke-linecap="round"/>
<path d="M712.70 220.20 L718.50 225.80 L724.30 220.20" fill="none" stroke="#b8b8b8" stroke-width="1.4" stroke-linecap="round" stroke-linejoin="round"/>
<path d="M741.6 215.2 H759.6 M741.6 221.6 H757.8 a3.4 3.4 0 0 1 0 6.8 H752.4 M754.8 225.6 L752 228.4 L754.8 231.2" fill="none" stroke="#a9cbea" stroke-width="1.3" stroke-linecap="round" stroke-linejoin="round"/>
<path d="M741.6 228.4 H746.6" stroke="#b8b8b8" stroke-width="1.3" stroke-linecap="round"/>
<rect x="781.8" y="213.2" width="19" height="17.6" rx="3" fill="none" stroke="#b8b8b8" stroke-width="1.3"/><path d="M781.8 216.7 H800.8 M781.8 227.2 H800.8 M785.6 222 H797 M787.8 219.8 L785.6 222 L787.8 224.2 M794.8 219.8 L797 222 L794.8 224.2" fill="none" stroke="#a9cbea" stroke-width="1.2" stroke-linecap="round" stroke-linejoin="round"/>
<path d="M809.70 220.20 L815.50 225.80 L821.30 220.20" fill="none" stroke="#b8b8b8" stroke-width="1.4" stroke-linecap="round" stroke-linejoin="round"/>
<path d="M982.20 220.20 L988.25 225.80 L994.30 220.20" fill="none" stroke="#b8b8b8" stroke-width="1.4" stroke-linecap="round" stroke-linejoin="round"/>
<path d="M1047.20 220.20 L1053.00 225.80 L1058.80 220.20" fill="none" stroke="#b8b8b8" stroke-width="1.4" stroke-linecap="round" stroke-linejoin="round"/>
<circle cx="1091.6" cy="228.7" r="4.9" fill="#a9cbea"/><path d="M1094.2 228.7 H1089.0 M1091.0 226.7 L1089.0 228.7 L1091.0 230.7" fill="none" stroke="#fff" stroke-width="1.1" stroke-linecap="round" stroke-linejoin="round"/>
<circle cx="1131.3" cy="228.7" r="4.9" fill="#a9cbea"/><path d="M1128.7 228.7 H1133.9 M1131.9 226.7 L1133.9 228.7 L1131.9 230.7" fill="none" stroke="#fff" stroke-width="1.1" stroke-linecap="round" stroke-linejoin="round"/>
<path d="M1180 214.9 H1171 a2.6 2.6 0 0 0 -2.6 2.6 V220.4 H1180z M1180 225.4 H1168.4 V228 a2.6 2.6 0 0 0 2.6 2.6 H1180z" fill="#fdd0d0" stroke="#f3a2a2" stroke-width="1.1" stroke-linejoin="round"/>
<path d="M1180 214.9 H1181.6 a2.6 2.6 0 0 1 2.6 2.6 V228 a2.6 2.6 0 0 1 -2.6 2.6 H1180 M1180 220.4 H1184.2 M1180 225.4 H1184.2 M1180 214.9 V230.6" fill="none" stroke="#b8b8b8" stroke-width="1.1"/>
<path d="M1168.4 220.4 V225.4 M1173.5 220.4 V225.4" stroke="#9cc3e8" stroke-width="1.2"/>
<path d="M1195.40 220.20 L1201.10 225.80 L1206.80 220.20" fill="none" stroke="#b8b8b8" stroke-width="1.4" stroke-linecap="round" stroke-linejoin="round"/>
<path d="M1252.8 214.5 H1237.9 L1245.3 222.5 L1237.9 230.6 H1252.8" fill="none" stroke="#242424" stroke-width="1.4" stroke-linejoin="round" stroke-linecap="round"/>
<path d="M1263.80 220.20 L1269.40 225.80 L1275.00 220.20" fill="none" stroke="#242424" stroke-width="1.5" stroke-linecap="round" stroke-linejoin="round"/>
<path d="M1298.4 213.3 H1312.2 L1306.4 222.4 V231.4 L1302.4 228.6 V222.4 L1300.4 219.4" fill="none" stroke="#b8b8b8" stroke-width="1.2" stroke-linejoin="round" stroke-linecap="round"/>
<text x="1291.7" y="222" font-size="12.2" fill="#9cc3e8" font-family="Liberation Sans,sans-serif" textLength="8" lengthAdjust="spacingAndGlyphs">A</text><text x="1292.6" y="232" font-size="10.2" fill="#b0b0b0" font-family="Liberation Sans,sans-serif">Z</text>
<path d="M1321.30 220.20 L1326.90 225.80 L1332.50 220.20" fill="none" stroke="#b8b8b8" stroke-width="1.4" stroke-linecap="round" stroke-linejoin="round"/>
<g fill="none" stroke="#242424" stroke-width="1.5" stroke-linecap="round"><circle cx="1357.6" cy="220.6" r="6.3"/><path d="M1362.2 225.2 L1367.6 230.8"/></g>
<path d="M1378.00 220.20 L1383.70 225.80 L1389.40 220.20" fill="none" stroke="#242424" stroke-width="1.5" stroke-linecap="round" stroke-linejoin="round"/>
<g fill="none" stroke="#e0392d" stroke-width="1.35"><rect x="1417.3" y="211.6" width="19.7" height="20.4" rx="3.4"/><rect x="1421.4" y="215.8" width="4.6" height="4.6" rx=".8"/><rect x="1428.4" y="215.8" width="4.6" height="4.6" rx=".8"/><rect x="1421.4" y="223.2" width="4.6" height="4.6" rx=".8"/><rect x="1428.4" y="223.2" width="4.6" height="4.6" rx=".8"/></g>
<path d="M1446.40 220.20 L1452.10 225.80 L1457.80 220.20" fill="none" stroke="#242424" stroke-width="1.5" stroke-linecap="round" stroke-linejoin="round"/>
<circle cx="1486.6" cy="221.6" r="1.75" fill="#242424"/>
<circle cx="1495.8" cy="221.6" r="1.75" fill="#242424"/>
<circle cx="1505" cy="221.6" r="1.75" fill="#242424"/>
<path d="M1571.50 227.80 L1577.45 233.60 L1583.40 227.80" fill="none" stroke="#242424" stroke-width="1.5" stroke-linecap="round" stroke-linejoin="round"/>
<path d="M142.00 265.00 L147.80 270.80 L153.60 265.00" fill="none" stroke="#242424" stroke-width="1.5" stroke-linecap="round" stroke-linejoin="round"/>
<path d="M176.3 260.2 L190.4 274.3 M190.4 260.2 L176.3 274.3" stroke="#b8b8b8" stroke-width="1.25" stroke-linecap="round"/>
<path d="M201.3 267.1 L207.4 273.2 L219.8 260.4" fill="none" stroke="#b8b8b8" stroke-width="1.25" stroke-linecap="round" stroke-linejoin="round"/>
<path d="M240.9 260 C239.6 258.8 237.5 259.2 236.9 261.6 L234.5 271.8 C234 274 232.4 274.9 231.1 273.7 M233.7 264.3 H240.2 M238.4 267.9 L245.2 274.2 M245.2 267.9 L238.4 274.2" fill="none" stroke="#242424" stroke-width="1.45" stroke-linecap="round" stroke-linejoin="round"/>
<path d="M1571.50 265.00 L1577.45 270.80 L1583.40 265.00" fill="none" stroke="#242424" stroke-width="1.5" stroke-linecap="round" stroke-linejoin="round"/>
<rect x="6" y="146.2" width="54" height="50.8" fill="none" stroke="#ff2600" stroke-width="6"/>
</svg>
<div class="a" style="left:48px;top:324px;width:1552px;height:642px;background:#fff"></div>
<div class="a" style="left:0;top:300px;width:1600px;height:24px;background:#f5f5f5"></div>
<div class="a" style="left:0;top:324px;width:48px;height:642px;background:#f5f5f5"></div>
<svg width="1600" height="966" viewBox="0 0 1600 966"><path d="M0 323.5 H1600" stroke="#fdfdfd" stroke-width="1.4"/><path d="M46.9 324 V897" stroke="#fcfcfc" stroke-width="1"/><path d="M48 356.19 H1600 M48 388.48 H1600 M48 420.77 H1600 M48 453.06 H1600 M48 485.35 H1600 M48 517.64 H1600 M48 549.93 H1600 M48 582.22 H1600 M48 614.51 H1600 M48 646.80 H1600 M48 679.09 H1600 M48 711.38 H1600 M48 743.67 H1600 M48 775.96 H1600 M48 808.25 H1600 M48 840.54 H1600 M48 877.00 H1600 M48 897.00 H1600 " stroke="#e6e6e6" stroke-width="1" fill="none"/><path d="M261.90 324 V897 M364.90 324 V897 M423.30 324 V897 M559.50 324 V897 M670.50 324 V897 M963.20 324 V897 M1047.70 324 V897 M1106.00 324 V897 " stroke="#e6e6e6" stroke-width="1" fill="none"/><path d="M0 356.19 H47 M0 388.48 H47 M0 420.77 H47 M0 453.06 H47 M0 485.35 H47 M0 517.64 H47 M0 549.93 H47 M0 582.22 H47 M0 614.51 H47 M0 646.80 H47 M0 679.09 H47 M0 711.38 H47 M0 743.67 H47 M0 775.96 H47 M0 808.25 H47 M0 840.54 H47 M0 877.00 H47 M261.90 304 V323 M364.90 304 V323 M423.30 304 V323 M559.50 304 V323 M670.50 304 V323 M963.20 304 V323 M1047.70 304 V323 M1106.00 304 V323 " stroke="#fdfdfd" stroke-width="1.1" fill="none"/><rect x="48.6" y="841.14" width="510.3" height="35.26" fill="#fff"/><rect x="671.2" y="808.85" width="800" height="31.09" fill="#fff"/><rect x="671.2" y="841.14" width="510" height="35.26" fill="#fff"/><path d="M0 895.7 H48" stroke="#9c9c9c" stroke-width="1.2"/><rect x="0" y="896.4" width="47.6" height="70" fill="#f5f5f5"/><rect x="262" y="300.9" width="102.6" height="22" fill="#c9e8d6"/><rect x="260.6" y="321.8" width="105.2" height="2.6" fill="#107c41"/><rect x="0" y="388.48" width="47.6" height="32.29" fill="#c9e8d6"/><rect x="45.3" y="387.2" width="3.1" height="35.1" fill="#107c41"/><path d="M43 305 V319.3 H28.2 Z" fill="#bdbdbd"/><rect x="671" y="711.88" width="291.9" height="32.59" fill="#ffff00"/><rect x="48" y="325" width="511" height="30.5" fill="#fff"/><rect x="671" y="325" width="940" height="30.5" fill="#fff"/><path d="M560.35 324.30 V357.35 " fill="none" stroke="#8f8f8f" stroke-width="1"/><rect x="48.60" y="325.10" width="509.80" height="29.80" fill="none" stroke="#383838" stroke-width="1.5"/><path d="M560.35 357.10 V842.15 M47.80 841.65 H560.85 " fill="none" stroke="#8f8f8f" stroke-width="1"/><rect x="48.60" y="357.90" width="509.80" height="481.80" fill="none" stroke="#383838" stroke-width="1.5"/><path d="M668.95 324.30 V357.35 " fill="none" stroke="#8f8f8f" stroke-width="1"/><rect x="670.90" y="325.10" width="1028.30" height="29.80" fill="none" stroke="#383838" stroke-width="1.5"/><path d="M668.95 357.10 V777.55 M668.45 777.05 H1700.00 " fill="none" stroke="#8f8f8f" stroke-width="1"/><rect x="670.90" y="357.90" width="1028.30" height="417.20" fill="none" stroke="#383838" stroke-width="1.5"/><rect x="262.30" y="452.86" width="101.80" height="32.44" fill="none" stroke="#303030" stroke-width="1.4"/><rect x="262.30" y="517.44" width="101.80" height="32.44" fill="none" stroke="#303030" stroke-width="1.4"/><rect x="262.30" y="582.02" width="101.80" height="32.44" fill="none" stroke="#303030" stroke-width="1.4"/><rect x="262.30" y="646.60" width="101.80" height="32.44" fill="none" stroke="#303030" stroke-width="1.4"/><rect x="262.30" y="711.18" width="101.80" height="32.44" fill="none" stroke="#303030" stroke-width="1.4"/><rect x="262.30" y="775.76" width="101.80" height="32.44" fill="none" stroke="#303030" stroke-width="1.4"/><rect x="963.30" y="388.28" width="84.30" height="32.44" fill="none" stroke="#303030" stroke-width="1.4"/><rect x="963.30" y="452.86" width="84.30" height="32.44" fill="none" stroke="#303030" stroke-width="1.4"/><rect x="963.30" y="517.44" width="84.30" height="32.44" fill="none" stroke="#303030" stroke-width="1.4"/><rect x="963.30" y="582.02" width="84.30" height="32.44" fill="none" stroke="#303030" stroke-width="1.4"/><rect x="963.30" y="646.60" width="84.30" height="32.44" fill="none" stroke="#303030" stroke-width="1.4"/><rect x="963.30" y="711.18" width="84.30" height="32.44" fill="none" stroke="#303030" stroke-width="1.4"/><rect x="261.65" y="388.05" width="103" height="33.3" fill="none" stroke="#107c41" stroke-width="2.1"/><rect x="361.5" y="418.1" width="6.5" height="6.5" fill="#fff"/><rect x="362.25" y="418.9" width="5" height="5" fill="#107c41"/></svg>
<span class="t" style="left:148.50px;top:304px;font-size:17.8px;color:#505050;font-family:'Liberation Serif',serif;transform:scaleX(1.0000);">A</span>
<span class="t" style="left:308.73px;top:305px;font-size:16px;color:#107c41;transform:scaleX(0.8925);">B</span>
<span class="t" style="left:388.29px;top:304px;font-size:17.8px;color:#505050;font-family:'Liberation Serif',serif;transform:scaleX(1.0000);">C</span>
<span class="t" style="left:485.07px;top:304px;font-size:17.8px;color:#505050;font-family:'Liberation Serif',serif;transform:scaleX(1.0000);">D</span>
<span class="t" style="left:609.75px;top:304px;font-size:17.8px;color:#505050;font-family:'Liberation Serif',serif;transform:scaleX(1.0000);">E</span>
<span class="t" style="left:811.97px;top:304px;font-size:17.8px;color:#505050;font-family:'Liberation Serif',serif;transform:scaleX(1.0000);">F</span>
<span class="t" style="left:998.94px;top:304px;font-size:17.8px;color:#505050;font-family:'Liberation Serif',serif;transform:scaleX(1.0000);">G</span>
<span class="t" style="left:1070.43px;top:304px;font-size:17.8px;color:#505050;font-family:'Liberation Serif',serif;transform:scaleX(1.0000);">H</span>
<span class="t" style="left:1376.03px;top:304px;font-size:17.8px;color:#505050;font-family:'Liberation Serif',serif;transform:scaleX(1.0000);">I</span>
<span class="t" style="left:32.28px;top:332px;font-size:18px;color:#505050;font-family:'Liberation Serif',serif;transform:scaleX(1.0000);">1</span>
<span class="t" style="left:32.19px;top:365px;font-size:18px;color:#505050;font-family:'Liberation Serif',serif;transform:scaleX(1.0000);">2</span>
<span class="t" style="left:31.79px;top:398px;font-size:16.4px;color:#107c41;transform:scaleX(0.9774);">3</span>
<span class="t" style="left:31.48px;top:429px;font-size:18px;color:#505050;font-family:'Liberation Serif',serif;transform:scaleX(1.0000);">4</span>
<span class="t" style="left:31.90px;top:462px;font-size:18px;color:#505050;font-family:'Liberation Serif',serif;transform:scaleX(1.0000);">5</span>
<span class="t" style="left:31.74px;top:494px;font-size:18px;color:#505050;font-family:'Liberation Serif',serif;transform:scaleX(1.0000);">6</span>
<span class="t" style="left:31.72px;top:526px;font-size:18px;color:#505050;font-family:'Liberation Serif',serif;transform:scaleX(1.0000);">7</span>
<span class="t" style="left:31.89px;top:558px;font-size:18px;color:#505050;font-family:'Liberation Serif',serif;transform:scaleX(1.0000);">8</span>
<span class="t" style="left:31.94px;top:591px;font-size:18px;color:#505050;font-family:'Liberation Serif',serif;transform:scaleX(1.0000);">9</span>
<span class="t" style="left:22.89px;top:623px;font-size:18px;color:#505050;font-family:'Liberation Serif',serif;transform:scaleX(1.0000);">10</span>
<span class="t" style="left:23.28px;top:655px;font-size:18px;color:#505050;font-family:'Liberation Serif',serif;transform:scaleX(1.0000);">11</span>
<span class="t" style="left:23.19px;top:688px;font-size:18px;color:#505050;font-family:'Liberation Serif',serif;transform:scaleX(1.0000);">12</span>
<span class="t" style="left:22.90px;top:720px;font-size:18px;color:#505050;font-family:'Liberation Serif',serif;transform:scaleX(1.0000);">13</span>
<span class="t" style="left:22.48px;top:752px;font-size:18px;color:#505050;font-family:'Liberation Serif',serif;transform:scaleX(1.0000);">14</span>
<span class="t" style="left:22.90px;top:784px;font-size:18px;color:#505050;font-family:'Liberation Serif',serif;transform:scaleX(1.0000);">15</span>
<span class="t" style="left:22.74px;top:817px;font-size:18px;color:#505050;font-family:'Liberation Serif',serif;transform:scaleX(1.0000);">16</span>
<span class="t" style="left:22.72px;top:851px;font-size:18px;color:#505050;font-family:'Liberation Serif',serif;transform:scaleX(1.0000);">17</span>
<span class="t" style="left:22.89px;top:878px;font-size:18px;color:#505050;font-family:'Liberation Serif',serif;transform:scaleX(1.0000);">18</span>
<span class="t" style="left:147.26px;top:394px;font-size:23.4px;transform:scaleX(1.0615);-webkit-text-stroke:0.3px #000;">Heart rate</span>
<span class="t" style="left:368.27px;top:394px;font-size:23.4px;transform:scaleX(1.0808);-webkit-text-stroke:0.3px #000;">bpm</span>
<span class="t" style="left:139.55px;top:459px;font-size:23.4px;transform:scaleX(1.0371);-webkit-text-stroke:0.3px #000;">QT interval</span>
<span class="t" style="left:368.35px;top:459px;font-size:23.4px;transform:scaleX(1.0002);-webkit-text-stroke:0.3px #000;">ms</span>
<span class="t" style="left:145.24px;top:523px;font-size:23.4px;transform:scaleX(0.9529);-webkit-text-stroke:0.3px #000;">QTc Bazett</span>
<span class="t" style="left:368.35px;top:523px;font-size:23.4px;transform:scaleX(1.0002);-webkit-text-stroke:0.3px #000;">ms</span>
<span class="t" style="left:112.01px;top:588px;font-size:23.4px;transform:scaleX(0.9842);-webkit-text-stroke:0.3px #000;">QTc Fridericia</span>
<span class="t" style="left:368.35px;top:588px;font-size:23.4px;transform:scaleX(1.0002);-webkit-text-stroke:0.3px #000;">ms</span>
<span class="t" style="left:77.30px;top:653px;font-size:23.4px;transform:scaleX(0.9934);-webkit-text-stroke:0.3px #000;">QTc Framingham</span>
<span class="t" style="left:368.35px;top:653px;font-size:23.4px;transform:scaleX(1.0002);-webkit-text-stroke:0.3px #000;">ms</span>
<span class="t" style="left:131.64px;top:717px;font-size:23.4px;transform:scaleX(0.9575);-webkit-text-stroke:0.3px #000;">QTc Hodges</span>
<span class="t" style="left:368.35px;top:717px;font-size:23.4px;transform:scaleX(1.0002);-webkit-text-stroke:0.3px #000;">ms</span>
<span class="t" style="left:93.70px;top:782px;font-size:23.4px;transform:scaleX(0.9956);-webkit-text-stroke:0.3px #000;">QTc Rautaharju</span>
<span class="t" style="left:368.35px;top:782px;font-size:23.4px;transform:scaleX(1.0002);-webkit-text-stroke:0.3px #000;">ms</span>
<span class="t" style="left:428.28px;top:523px;font-size:23.4px;transform:scaleX(1.1120);-webkit-text-stroke:0.3px #000;">*</span>
<span class="t" style="left:223.91px;top:330px;font-size:23.4px;transform:scaleX(0.9790);-webkit-text-stroke:0.3px #000;">QTc Calculator</span>
<span class="t" style="left:991.65px;top:330px;font-size:23.4px;transform:scaleX(1.0140);-webkit-text-stroke:0.3px #000;">Modified QTc due to broad QRS</span>
<span class="t" style="left:841.75px;top:394px;font-size:23.4px;transform:scaleX(1.0684);-webkit-text-stroke:0.3px #000;">Heart rate</span>
<span class="t" style="left:1051.45px;top:394px;font-size:23.4px;transform:scaleX(1.0949);-webkit-text-stroke:0.3px #000;">bpm</span>
<span class="t" style="left:816.49px;top:459px;font-size:23.4px;transform:scaleX(1.0033);-webkit-text-stroke:0.3px #000;">QRS duration</span>
<span class="t" style="left:1051.51px;top:459px;font-size:23.4px;transform:scaleX(1.0246);-webkit-text-stroke:0.3px #000;">ms</span>
<span class="t" style="left:852.84px;top:523px;font-size:23.4px;transform:scaleX(0.9548);-webkit-text-stroke:0.3px #000;">QT in BBB</span>
<span class="t" style="left:1051.51px;top:523px;font-size:23.4px;transform:scaleX(1.0246);-webkit-text-stroke:0.3px #000;">ms</span>
<span class="t" style="left:810.56px;top:588px;font-size:23.4px;transform:scaleX(1.0566);-webkit-text-stroke:0.3px #000;">Gender (M/F)</span>
<span class="t" style="left:674.02px;top:653px;font-size:23.4px;transform:scaleX(1.0333);-webkit-text-stroke:0.3px #000;">Modified QTc (Rautaharju)</span>
<span class="t" style="left:1051.51px;top:653px;font-size:23.4px;transform:scaleX(1.0246);-webkit-text-stroke:0.3px #000;">ms</span>
<span class="t" style="left:693.13px;top:717px;font-size:23.4px;transform:scaleX(1.0269);-webkit-text-stroke:0.3px #000;">Modified QT (Bogossian)</span>
<span class="t" style="left:1051.51px;top:717px;font-size:23.4px;transform:scaleX(1.0246);-webkit-text-stroke:0.3px #000;">ms</span>
<span class="t" style="left:1124.16px;top:718px;font-size:22.2px;font-style:italic;transform:scaleX(1.0894);-webkit-text-stroke:0.25px #000;">Needs rate correction - use calculator to the</span>
<span class="t" style="left:674.69px;top:816px;font-size:22.2px;font-style:italic;transform:scaleX(1.0809);-webkit-text-stroke:0.25px #000;">*Please note the Bazett's is known to overestimate the QTc at faster rates</span>
<span class="t" style="left:674.56px;top:850px;font-size:22.2px;font-style:italic;transform:scaleX(1.0869);-webkit-text-stroke:0.25px #000;">and underestimate the QTc during bradycardia</span>
<span class="t" style="left:186.96px;top:850px;font-size:20.9px;font-style:italic;transform:scaleX(0.9867);-webkit-text-stroke:0.25px #000;">Created by Arron Pearce</span>
</body></html>
